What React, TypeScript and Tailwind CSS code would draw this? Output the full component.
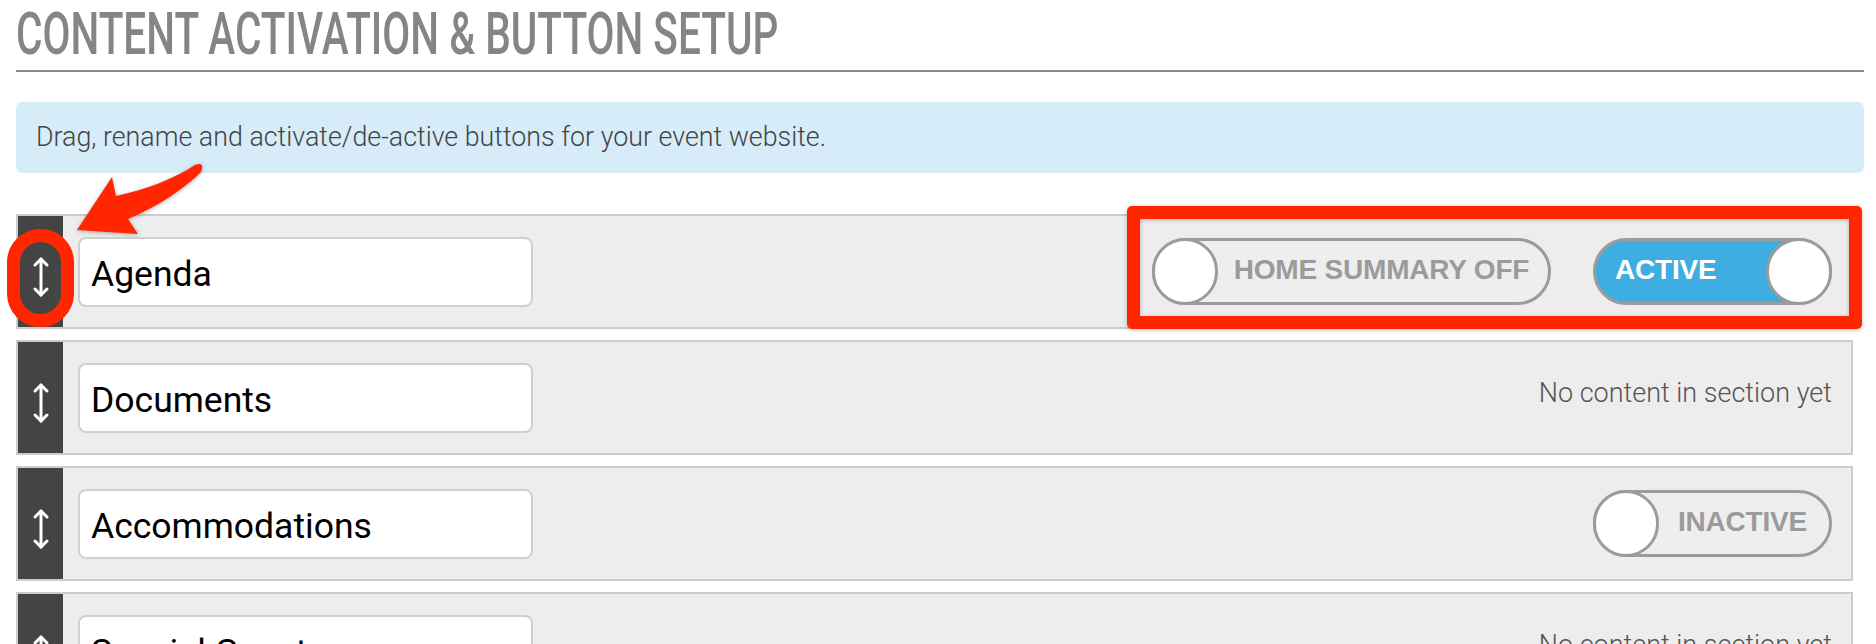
type Section = {
  name: string
  status: 'active' | 'inactive' | 'empty'
  homeSummary?: boolean
}

const sections: Section[] = [
  { name: 'Agenda', status: 'active', homeSummary: true },
  { name: 'Documents', status: 'empty' },
  { name: 'Accommodations', status: 'inactive' },
  { name: 'Special Guests', status: 'empty' },
]

function DragHandle() {
  return (
    <div className="self-stretch w-[45px] shrink-0 bg-[#444444] flex items-center justify-center pt-[10px]">
      <svg width="18" height="42" viewBox="0 0 18 42" fill="none" stroke="white" strokeWidth="3" strokeLinecap="round" strokeLinejoin="round">
        <path d="M9 3 L9 39" />
        <path d="M3 9 L9 3 L15 9" />
        <path d="M3 33 L9 39 L15 33" />
      </svg>
    </div>
  )
}

function Toggle({ on, label, width }: { on: boolean; label: string; width: string }) {
  if (on) {
    return (
      <div className={`${width} h-[67px] rounded-full border-[3px] border-[#9b9b9b] bg-[#3eaee2] flex items-center`}>
        <span className="flex-1 pl-[19px] pb-[4px] text-[28px] font-bold text-white leading-none tracking-[-0.2px]">{label}</span>
        <div className="h-[67px] w-[66px] -m-[3px] shrink-0 rounded-full border-[3px] border-[#9b9b9b] bg-white" />
      </div>
    )
  }
  return (
    <div className={`${width} h-[67px] rounded-full border-[3px] border-[#9b9b9b] bg-[#eeeeee] flex items-center`}>
      <div className="h-[67px] w-[66px] -m-[3px] shrink-0 rounded-full border-[3px] border-[#9b9b9b] bg-white" />
      <span className="flex-1 text-center pb-[4px] text-[28px] font-bold text-[#9b9b9b] leading-none tracking-[-0.2px]">{label}</span>
    </div>
  )
}

function SectionRow({ section }: { section: Section }) {
  return (
    <div className="h-[115px] shrink-0 flex items-center border-2 border-[#cccccc] bg-[#ededed]">
      <DragHandle />
      <div className="ml-[15px] w-[455px] h-[70px] rounded-lg border-2 border-[#d0d0d0] bg-white flex items-center pl-[11px] pt-[6px] font-['Roboto',sans-serif] text-[35.5px] text-black">
        {section.name}
      </div>
      <div className="ml-auto pr-[19px] flex items-center gap-[42px]">
        {section.status === 'empty' ? (
          <span className="font-['Roboto',sans-serif] font-light text-[27px] text-[#555555] -mt-[8px]">
            No content in section yet
          </span>
        ) : (
          <>
            {section.homeSummary !== undefined && (
              <Toggle on={false} label="HOME SUMMARY OFF" width="w-[399px]" />
            )}
            <Toggle on={section.status === 'active'} label={section.status === 'active' ? 'ACTIVE' : 'INACTIVE'} width="w-[239px]" />
          </>
        )}
      </div>
    </div>
  )
}

export default function App() {
  return (
    <div className="relative min-h-screen bg-white pl-4 pr-3 font-['Liberation_Sans',Arial,sans-serif] overflow-hidden">
      {/* Page heading */}
      <h1 className="pt-[4px] pb-[6px] border-b-2 border-[#888888] h-[72px] leading-[60px] whitespace-nowrap">
        <span className="inline-block origin-left scale-x-[0.676] font-['Roboto',sans-serif] font-medium text-[60px] text-[#858585]">
          CONTENT ACTIVATION &amp; BUTTON SETUP
        </span>
      </h1>

      <div className="mt-[30px] h-[71px] rounded-md bg-[#d6ecf8] flex items-center pl-[20px] font-['Roboto',sans-serif] font-light text-[26.8px] text-[#444444]">
        Drag, rename and activate/de-active buttons for your event website.
      </div>

      <div className="mt-[41px] mr-[11px] flex flex-col gap-[11px]">
        {sections.map(s => (
          <SectionRow key={s.name} section={s} />
        ))}
      </div>

      {/* Annotations */}
      <div className="absolute left-[1127px] top-[206px] w-[735px] h-[123px] rounded-[5px] border-[13px] border-[#ff2600] pointer-events-none drop-shadow-[0_1px_2px_rgba(0,0,0,0.25)]" />
      <div className="absolute left-[7px] top-[229px] w-[67px] h-[98px] rounded-full border-[13px] border-[#ff2600] pointer-events-none" />
      <svg className="absolute left-0 top-0 pointer-events-none drop-shadow-[0_1px_2px_rgba(0,0,0,0.3)]" width="220" height="250" viewBox="0 0 220 250">
        <path
          d="M77 230 L112 177 L116 196 C144 190 172 180 195 165 Q205 161 201 172 C183 190 158 206 128 219 L138 234 Z"
          fill="#ff2600"
        />
      </svg>
    </div>
  )
}
